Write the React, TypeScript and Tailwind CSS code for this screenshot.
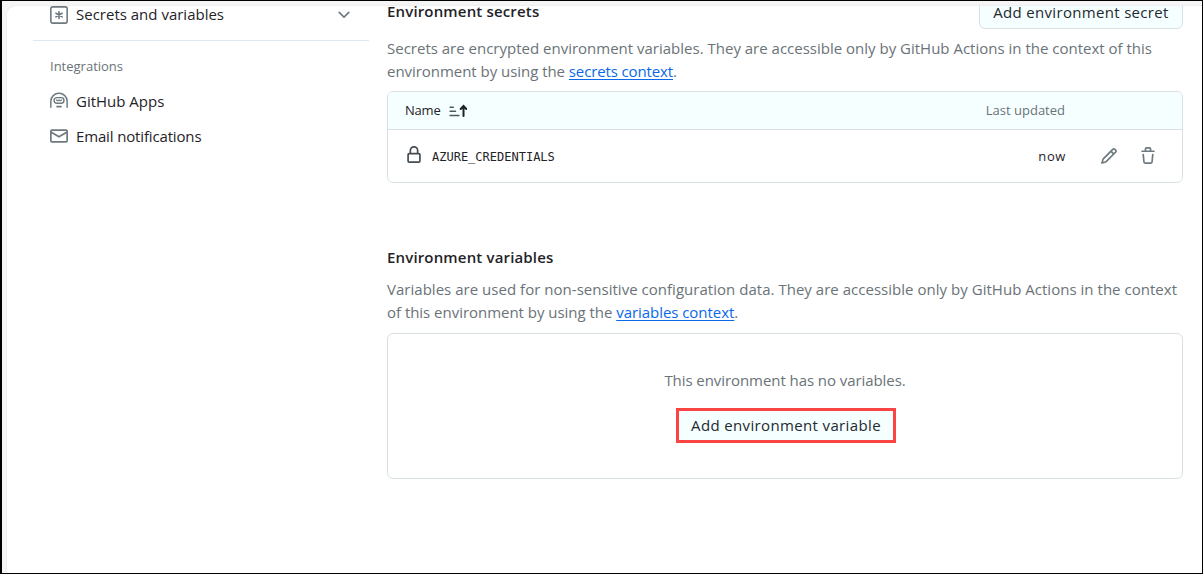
import React from "react";
import type { ReactNode } from "react";

type IconProps = { className?: string; children: ReactNode };

function Icon({ className = "", children }: IconProps) {
  return (
    <svg viewBox="0 0 16 16" fill="currentColor" aria-hidden="true" className={`shrink-0 ${className}`}>
      {children}
    </svg>
  );
}

function KeyAsteriskIcon() {
  return (
    <Icon className="size-[18px]">
      <rect x="0.75" y="0.75" width="14.5" height="14.5" rx="1.6" fill="none" stroke="currentColor" strokeWidth="1.4" />
      <path d="M8 5v6M5.3 6.4l5.4 3.2M10.7 6.4 5.3 9.6" fill="none" stroke="currentColor" strokeWidth="1.4" strokeLinecap="round" />
    </Icon>
  );
}

function HubotIcon() {
  return (
    <Icon className="size-[18px]">
      <g fill="none" stroke="currentColor" strokeWidth="1.3" strokeLinecap="round">
        <path d="M.75 13.6V8a7.25 6.8 0 0 1 14.5 0v5.6" />
        <rect x="3.6" y="5" width="8.8" height="5" rx="2.4" />
        <path d="M5.8 7.1l1.1.7 1.1-.7 1.1.7 1.1-.7" strokeWidth="1.1" />
        <path d="M6.2 13h3.6" strokeWidth="1.4" />
      </g>
    </Icon>
  );
}

function MailIcon() {
  return (
    <Icon className="size-[18px]">
      <path d="M1.75 2h12.5c.966 0 1.75.784 1.75 1.75v8.5A1.75 1.75 0 0 1 14.25 14H1.75A1.75 1.75 0 0 1 0 12.25v-8.5C0 2.784.784 2 1.75 2ZM1.5 12.251c0 .138.112.25.25.25h12.5a.25.25 0 0 0 .25-.25V5.809L8.38 9.397a.75.75 0 0 1-.76 0L1.5 5.809v6.442Zm13-8.181v-.32a.25.25 0 0 0-.25-.25H1.75a.25.25 0 0 0-.25.25v.32L8 7.88Z" />
    </Icon>
  );
}

function ChevronDownIcon() {
  return (
    <Icon className="size-[18px]">
      <path d="M12.78 5.22a.749.749 0 0 1 0 1.06l-4.25 4.25a.749.749 0 0 1-1.06 0L3.22 6.28a.749.749 0 1 1 1.06-1.06L8 8.939l3.72-3.719a.749.749 0 0 1 1.06 0Z" />
    </Icon>
  );
}

function SortAscIcon() {
  return (
    <Icon className="size-[18px]">
      <path d="M1 4.6h2.8M1 8.2h4.8M1 12h7.8" fill="none" stroke="#4d565c" strokeWidth="1.4" strokeLinecap="round" />
      <path d="M12.9 12.4V4M10.4 6.2l2.5-2.6 2.5 2.6" fill="none" stroke="currentColor" strokeWidth="1.8" strokeLinecap="round" />
    </Icon>
  );
}

function LockIcon() {
  return (
    <Icon className="size-[18px]">
      <path d="M4 4a4 4 0 0 1 8 0v2h.25c.966 0 1.75.784 1.75 1.75v5.5A1.75 1.75 0 0 1 12.25 15h-8.5A1.75 1.75 0 0 1 2 13.25v-5.5C2 6.784 2.784 6 3.75 6H4Zm8.25 3.5h-8.5a.25.25 0 0 0-.25.25v5.5c0 .138.112.25.25.25h8.5a.25.25 0 0 0 .25-.25v-5.5a.25.25 0 0 0-.25-.25ZM10.5 6V4a2.5 2.5 0 1 0-5 0v2Z" />
    </Icon>
  );
}

function PencilIcon() {
  return (
    <Icon className="size-[18px]">
      <path d="M11.013 1.427a1.75 1.75 0 0 1 2.474 0l1.086 1.086a1.75 1.75 0 0 1 0 2.474l-8.61 8.61c-.21.21-.47.364-.756.445l-3.251.93a.75.75 0 0 1-.927-.928l.929-3.25c.081-.286.235-.547.445-.758l8.61-8.61Zm.176 4.823L9.75 4.81l-6.286 6.287a.253.253 0 0 0-.064.108l-.558 1.953 1.953-.558a.253.253 0 0 0 .108-.064Zm1.238-3.763a.25.25 0 0 0-.354 0L10.811 3.75l1.439 1.44 1.263-1.263a.25.25 0 0 0 0-.354Z" />
    </Icon>
  );
}

function TrashIcon() {
  return (
    <Icon className="size-[18px]">
      <path d="M11 1.75V3h2.25a.75.75 0 0 1 0 1.5H2.75a.75.75 0 0 1 0-1.5H5V1.75C5 .784 5.784 0 6.75 0h2.5C10.216 0 11 .784 11 1.75ZM4.496 6.675l.66 6.6a.25.25 0 0 0 .249.225h5.19a.25.25 0 0 0 .249-.225l.66-6.6a.75.75 0 0 1 1.492.149l-.66 6.6A1.748 1.748 0 0 1 10.595 15h-5.19a1.75 1.75 0 0 1-1.741-1.575l-.66-6.6a.75.75 0 1 1 1.492-.15ZM6.5 1.75V3h3V1.75a.25.25 0 0 0-.25-.25h-2.5a.25.25 0 0 0-.25.25Z" />
    </Icon>
  );
}

function Sidebar() {
  return (
    <nav className="w-[336px] shrink-0 text-[#1f2328]">
      <div className="flex h-[35px] items-start justify-between border-b border-[#dfe9ef] pr-4 pl-[17px]">
        <a className="flex h-[18px] items-center gap-2">
          <span className="text-[#6e7a80]"><KeyAsteriskIcon /></span>
          <span className="pb-[2px]">Secrets and variables</span>
        </a>
        <span className="text-[#6e7a80]"><ChevronDownIcon /></span>
      </div>
      <h3 className="mt-[15px] pl-[17px] text-[13px] leading-5 text-[#6a7378]">Integrations</h3>
      <a className="mt-[15px] flex h-[20px] items-center gap-2 pl-[17px]">
        <span className="text-[#6e7a80]"><HubotIcon /></span>
        <span>GitHub Apps</span>
      </a>
      <a className="mt-[15px] flex h-[20px] items-center gap-2 pl-[17px]">
        <span className="text-[#6e7a80]"><MailIcon /></span>
        <span className="tracking-[-0.15px]">Email notifications</span>
      </a>
    </nav>
  );
}

function Secrets() {
  return (
    <section>
      <header className="flex h-[28px] justify-between">
        <h2 className="-mt-[5px] font-semibold leading-5 tracking-[0.16px] text-[#1f2328]">Environment secrets</h2>
        <button className="-mt-[12px] h-[35px] w-[204px] rounded-[6px] border border-[#d8e0e4] bg-[#f6ffff] leading-5 tracking-[0.32px] text-[#24292f]">
          Add environment secret
        </button>
      </header>
      <p className="mt-[3px] whitespace-nowrap leading-[23px] text-[#6a7378]">
        Secrets are encrypted environment variables. They are accessible only by GitHub Actions in the context of this
        <br />
        <span className="tracking-[-0.04px]">environment by using the </span>
        <a className="tracking-[-0.13px] text-[#0969e8] underline underline-offset-2">secrets context</a>.
      </p>
      <div className="mt-[8px] h-[92px] overflow-hidden rounded-[6px] border border-[#d8e0e4]">
        <div className="flex h-[38px] items-center border-b border-[#d8e0e4] bg-[#f6ffff] pl-[17px] text-[13px]">
          <span className="tracking-[-0.2px] text-[#1f2328]">Name</span>
          <span className="ml-[8px] text-[#1f2328]"><SortAscIcon /></span>
          <span className="mr-[117px] ml-auto text-[#6a7378]">Last updated</span>
        </div>
        <div className="flex h-[52px] items-center pl-[17px] text-[#1f2328]">
          <span className="pb-[2px] text-[#444c52]"><LockIcon /></span>
          <span className="ml-[9px] pt-[2px] font-['DejaVu_Sans_Mono',monospace] text-[12px]">AZURE_CREDENTIALS</span>
          <span className="ml-auto pt-[2px] text-[13px] tracking-[0.6px]">now</span>
          <span className="ml-[34px] text-[#6e7a80]"><PencilIcon /></span>
          <span className="mr-[25px] ml-[21px] text-[#6e7a80]"><TrashIcon /></span>
        </div>
      </div>
    </section>
  );
}

function Variables() {
  return (
    <section className="mt-[63px]">
      <h2 className="font-semibold leading-[22px] tracking-[0.16px] text-[#1f2328]">Environment variables</h2>
      <p className="mt-[10px] whitespace-nowrap leading-[23px] text-[#6a7378]">
        <span className="tracking-[0.026px]">
          Variables are used for non-sensitive configuration data. They are accessible only by GitHub Actions in the context
        </span>
        <br />
        <span className="tracking-[-0.03px]">of this environment by using the </span>
        <a className="tracking-[-0.05px] text-[#0969e8] underline underline-offset-2">variables context</a>.
      </p>
      <div className="mt-[9px] flex h-[146px] flex-col items-center rounded-[6px] border border-[#d8e0e4] pt-[36px]">
        <p className="leading-5 tracking-[-0.07px] text-[#6a7378]">This environment has no variables.</p>
        <button className="mt-[18px] ml-[2px] h-[35px] w-[220px] border-3 border-[#fb4545] bg-[#f6ffff] pb-[2px] leading-5 tracking-[0.36px] text-[#24292f]">
          Add environment variable
        </button>
      </div>
    </section>
  );
}

export default function App() {
  return (
    <div className="h-[574px] w-[1203px] overflow-hidden border border-l-2 border-black bg-[#f5f5f5] pt-[4px] pl-[4px] font-['Open_Sans','Noto_Sans',sans-serif] text-[15px]">
      <main className="flex h-full overflow-hidden rounded-tl-[10px] border-t border-l border-[#eeeeee] bg-white pl-[26px]">
        <Sidebar />
        <div className="ml-[18px] w-[796px] shrink-0">
          <Secrets />
          <Variables />
        </div>
      </main>
    </div>
  );
}
